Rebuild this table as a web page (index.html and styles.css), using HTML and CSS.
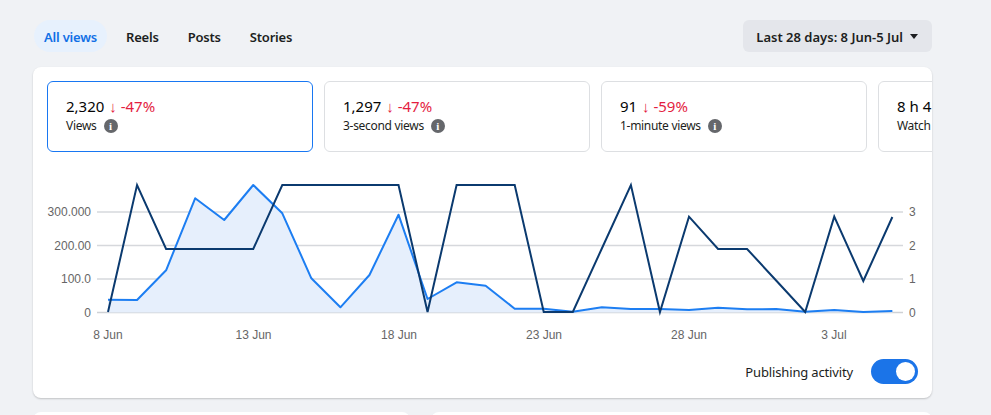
FILE: index.html
```html
<!DOCTYPE html>
<html lang="en">
<head>
<meta charset="utf-8">
<title>Views</title>
<link rel="stylesheet" href="styles.css">
</head>
<body>
<div class="page">
  <div class="topbar">
    <nav class="tabs">
      <span class="tab active">All views</span>
      <span class="tab">Reels</span>
      <span class="tab">Posts</span>
      <span class="tab">Stories</span>
    </nav>
    <button class="range">Last 28 days: 8 Jun-5 Jul <span class="caret"></span></button>
  </div>

  <section class="card">
    <div class="metrics">
      <div class="metric selected">
        <div class="value">2,320 <span class="delta">↓ -47%</span></div>
        <div class="label">Views <span class="info">i</span></div>
      </div>
      <div class="metric">
        <div class="value">1,297 <span class="delta">↓ -47%</span></div>
        <div class="label">3-second views <span class="info">i</span></div>
      </div>
      <div class="metric">
        <div class="value">91 <span class="delta">↓ -59%</span></div>
        <div class="label">1-minute views <span class="info">i</span></div>
      </div>
      <div class="metric">
        <div class="value">8 h 41 m</div>
        <div class="label">Watch time <span class="info">i</span></div>
      </div>
    </div>

    <svg class="chart" width="899" height="198" viewBox="33 152 899 198" xmlns="http://www.w3.org/2000/svg">
      <g stroke="#d6d8dc" stroke-width="1.5">
        <line x1="97" y1="212" x2="903" y2="212"/>
        <line x1="97" y1="245.5" x2="903" y2="245.5"/>
        <line x1="97" y1="279" x2="903" y2="279"/>
        <line x1="97" y1="312.5" x2="903" y2="312.5" stroke="#cfd1d5"/>
      </g>
      <g class="axis" text-anchor="end">
        <text x="91" y="216">300.000</text>
        <text x="91" y="249.5">200.00</text>
        <text x="91" y="283">100.0</text>
        <text x="91" y="316.5">0</text>
      </g>
      <g class="axis" text-anchor="start">
        <text x="909" y="216">3</text>
        <text x="909" y="249.5">2</text>
        <text x="909" y="283">1</text>
        <text x="909" y="316.5">0</text>
      </g>
      <g class="axis" text-anchor="middle">
        <text x="108" y="339">8 Jun</text>
        <text x="253.5" y="339">13 Jun</text>
        <text x="399" y="339">18 Jun</text>
        <text x="544" y="339">23 Jun</text>
        <text x="689" y="339">28 Jun</text>
        <text x="834" y="339">3 Jul</text>
      </g>
      <polygon fill="#e6effc" points="108,299.7 137.05,300 166.1,270.3 195.15,198.3 224.2,220 253.25,185 282.3,213.3 311.35,278.3 340.4,307.3 369.45,275 398.5,214.7 427.55,299 456.6,282.3 485.65,285.7 514.7,308.7 543.75,308.7 572.8,311.7 601.85,307.3 630.9,309 659.95,309 689,310 718.05,307.7 747.1,309.3 776.15,309 805.2,311.7 834.25,310 863.3,312 892.35,311 892.35,312.5 108,312.5"/>
      <polyline fill="none" stroke="#1d7ef2" stroke-width="2" stroke-linejoin="round" points="108,299.7 137.05,300 166.1,270.3 195.15,198.3 224.2,220 253.25,185 282.3,213.3 311.35,278.3 340.4,307.3 369.45,275 398.5,214.7 427.55,299 456.6,282.3 485.65,285.7 514.7,308.7 543.75,308.7 572.8,311.7 601.85,307.3 630.9,309 659.95,309 689,310 718.05,307.7 747.1,309.3 776.15,309 805.2,311.7 834.25,310 863.3,312 892.35,311"/>
      <polyline fill="none" stroke="#0b3a6f" stroke-width="2" stroke-linejoin="miter" points="108,312 137.05,185 166.1,249 195.15,249 224.2,249 253.25,249 282.3,185 311.35,185 340.4,185 369.45,185 398.5,185 427.55,312 456.6,185 485.65,185 514.7,185 543.75,312 572.8,312 601.85,248.5 630.9,185 659.95,312 689,216.7 718.05,249 747.1,249 776.15,280.5 805.2,312 834.25,216.7 863.3,281 892.35,217"/>
    </svg>

    <div class="footer">
      <span class="toggle-label">Publishing activity</span>
      <span class="toggle"><span class="knob"></span></span>
    </div>
  </section>

  <div class="lower">
    <div class="lower-card"></div>
    <div class="lower-card"></div>
  </div>
</div>
</body>
</html>
```

FILE: styles.css
```css
* { box-sizing: border-box; }

html, body {
  margin: 0;
  background: #f0f2f5;
  height: 100%;
  overflow: hidden;
}

body {
  font-family: "Noto Sans", "Open Sans", "Liberation Sans", sans-serif;
  color: #1c1e21;
}

.page {
  padding: 20px 59px 0 34px;
}

.topbar {
  display: flex;
  justify-content: space-between;
  align-items: center;
  height: 32px;
}

.tabs {
  display: flex;
  gap: 9px;
}

.tab {
  display: flex;
  align-items: center;
  height: 32px;
  padding: 1px 10px 0;
  border-radius: 16px;
  font-size: 13px;
  font-weight: 600;
  color: #1c1e21;
  letter-spacing: -0.2px;
}

.tab.active {
  background: #e7f1fd;
  color: #1170e6;
}

.range {
  height: 32px;
  border: 0;
  border-radius: 6px;
  background: #e4e6eb;
  padding: 1px 14px 0 13px;
  font-family: inherit;
  font-size: 13px;
  font-weight: 600;
  color: #1c1e21;
  display: flex;
  align-items: center;
  gap: 7px;
  letter-spacing: 0;
}

.caret {
  width: 0;
  height: 0;
  border-left: 4.5px solid transparent;
  border-right: 4.5px solid transparent;
  border-top: 5px solid #1c1e21;
}

.card {
  margin-top: 15px;
  margin-left: -1px;
  background: #fff;
  border-radius: 8px;
  box-shadow: 0 1px 2px rgba(0, 0, 0, 0.2);
  padding: 14px 0 14px 14px;
  overflow: hidden;
}

.metrics {
  display: flex;
  gap: 11px;
  overflow: hidden;
}

.metric {
  flex: 0 0 266px;
  height: 71px;
  border: 1px solid #dddfe2;
  border-radius: 6px;
  padding: 13px 18px;
  white-space: nowrap;
}

.metric.selected {
  border-color: #1877f2;
}

.value {
  font-size: 15px;
  line-height: 22px;
  color: #050505;
}

.delta {
  color: #e41e3f;
  margin-left: 1px;
}

.label {
  font-size: 12px;
  line-height: 18px;
  display: flex;
  align-items: center;
  gap: 7px;
  color: #1c1e21;
  letter-spacing: -0.3px;
}

.info {
  width: 14px;
  height: 14px;
  border-radius: 50%;
  background: #65676b;
  color: #fff;
  font-family: "Liberation Serif", serif;
  font-weight: 700;
  font-size: 11px;
  line-height: 14px;
  text-align: center;
  letter-spacing: 0;
}

.chart {
  display: block;
  margin-left: -14px;
}

.axis text {
  font-family: "Liberation Sans", Arial, sans-serif;
  font-size: 12px;
  fill: #666;
}

.footer {
  display: flex;
  justify-content: flex-end;
  align-items: center;
  gap: 18px;
  margin-top: 9px;
  padding-right: 14px;
}

.toggle-label {
  font-size: 13px;
  letter-spacing: -0.15px;
  color: #1c1e21;
}

.toggle {
  width: 47px;
  height: 25px;
  border-radius: 13px;
  background: #1b74e8;
  display: flex;
  justify-content: flex-end;
  align-items: center;
  padding-right: 3px;
}

.knob {
  width: 19px;
  height: 19px;
  border-radius: 50%;
  background: #fff;
}

.lower {
  display: grid;
  grid-template-columns: 377px 1fr;
  gap: 21px;
  margin-top: 14px;
  margin-left: -1px;
}

.lower-card {
  height: 40px;
  background: #fff;
  border-radius: 8px;
}
```
